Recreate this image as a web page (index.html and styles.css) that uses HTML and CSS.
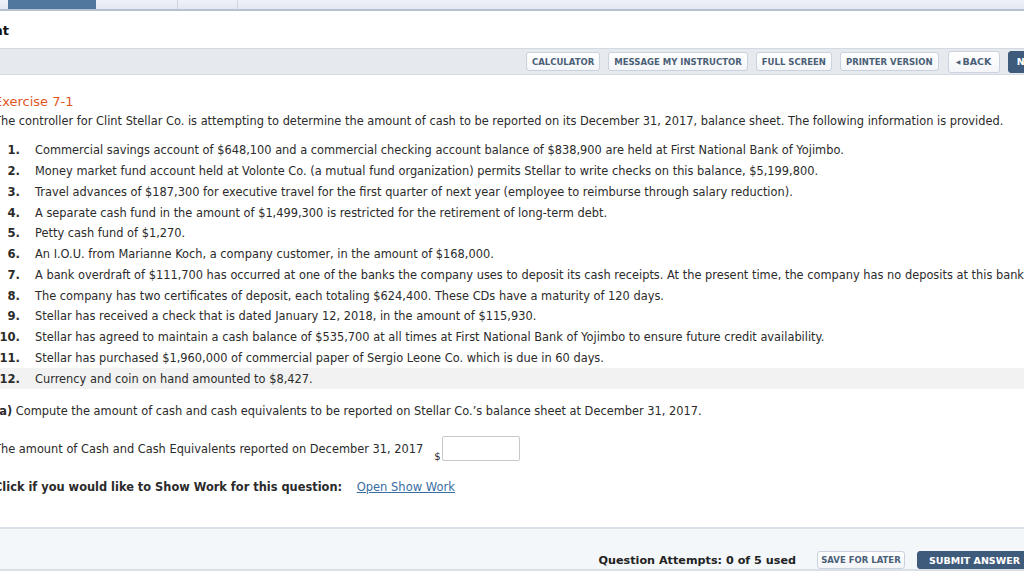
FILE: index.html
```html
<!DOCTYPE html>
<html lang="en">
<head>
<meta charset="utf-8">
<title>Exercise 7-1</title>
<link rel="stylesheet" href="styles.css">
</head>
<body>
<div class="tabs">
  <div class="tab active"></div>
  <div class="tab t2"></div>
  <div class="tab t3"></div>
  <div class="tab rest"></div>
</div>
<header class="titlebar">
  <div class="title-clip"><h1 class="title">Assignment</h1></div>
</header>
<nav class="toolbar">
  <button class="btn">CALCULATOR</button>
  <button class="btn">MESSAGE MY INSTRUCTOR</button>
  <button class="btn">FULL SCREEN</button>
  <button class="btn">PRINTER VERSION</button>
  <button class="btn nav-btn back"><span class="arrow">&#9664;</span>BACK</button>
  <button class="btn nav-btn dark">NEXT</button>
</nav>
<main class="content">
  <h2 class="exercise">Exercise 7-1</h2>
  <p class="intro">The controller for Clint Stellar Co. is attempting to determine the amount of cash to be reported on its December 31, 2017, balance sheet. The following information is provided.</p>
  <ol class="items">
    <li class="item"><span class="num">1.</span><span class="txt">Commercial savings account of $648,100 and a commercial checking account balance of $838,900 are held at First National Bank of Yojimbo.</span></li>
    <li class="item"><span class="num">2.</span><span class="txt">Money market fund account held at Volonte Co. (a mutual fund organization) permits Stellar to write checks on this balance, $5,199,800.</span></li>
    <li class="item"><span class="num">3.</span><span class="txt">Travel advances of $187,300 for executive travel for the first quarter of next year (employee to reimburse through salary reduction).</span></li>
    <li class="item"><span class="num">4.</span><span class="txt">A separate cash fund in the amount of $1,499,300 is restricted for the retirement of long-term debt.</span></li>
    <li class="item"><span class="num">5.</span><span class="txt">Petty cash fund of $1,270.</span></li>
    <li class="item"><span class="num">6.</span><span class="txt">An I.O.U. from Marianne Koch, a company customer, in the amount of $168,000.</span></li>
    <li class="item"><span class="num">7.</span><span class="txt">A bank overdraft of $111,700 has occurred at one of the banks the company uses to deposit its cash receipts. At the present time, the company has no deposits at this bank.</span></li>
    <li class="item"><span class="num">8.</span><span class="txt">The company has two certificates of deposit, each totaling $624,400. These CDs have a maturity of 120 days.</span></li>
    <li class="item"><span class="num">9.</span><span class="txt">Stellar has received a check that is dated January 12, 2018, in the amount of $115,930.</span></li>
    <li class="item"><span class="num">10.</span><span class="txt">Stellar has agreed to maintain a cash balance of $535,700 at all times at First National Bank of Yojimbo to ensure future credit availability.</span></li>
    <li class="item"><span class="num">11.</span><span class="txt">Stellar has purchased $1,960,000 of commercial paper of Sergio Leone Co. which is due in 60 days.</span></li>
    <li class="item shaded"><span class="num">12.</span><span class="txt">Currency and coin on hand amounted to $8,427.</span></li>
  </ol>
  <p class="question"><b>(a)</b> Compute the amount of cash and cash equivalents to be reported on Stellar Co.’s balance sheet at December 31, 2017.</p>
  <div class="answer-row">
    <span class="answer-label">The amount of Cash and Cash Equivalents reported on December 31, 2017</span>
    <span class="dollar">$</span>
    <input class="answer-input" type="text" aria-label="amount">
  </div>
  <p class="showwork"><b>Click if you would like to Show Work for this question:</b> <a class="link" href="#">Open Show Work</a></p>
</main>
<footer class="footer">
  <span class="attempts">Question Attempts: 0 of 5 used</span>
  <button class="btn save">SAVE FOR LATER</button>
  <button class="btn submit">SUBMIT ANSWER</button>
</footer>
</body>
</html>
```

FILE: styles.css
```css
* { box-sizing: border-box; }
html, body { margin: 0; padding: 0; }
body {
  width: 1024px;
  height: 576px;
  overflow: hidden;
  background: #fff;
  font-family: "DejaVu Sans", Verdana, sans-serif;
  font-size: 11.4px;
  color: #2b2b2b;
}

/* top tabs */
.tabs {
  display: flex;
  height: 11px;
  background: linear-gradient(#eef1f7, #e3e8f1);
  border-bottom: 2px solid #b6c2d0;
}
.tab { height: 100%; border-right: 1px solid #cfd6e1; }
.tab.active { width: 88px; margin-left: 8px; background: #51779e; border-right: none; }
.tab.t2 { width: 82px; }
.tab.t3 { width: 60px; }
.tab.rest { flex: 1; border-right: none; }

/* title */
.titlebar {
  height: 37px;
  display: flex;
  align-items: center;
}
.title-clip {
  width: 9px;
  display: flex;
  justify-content: flex-end;
}
.title {
  margin: 0;
  font-size: 13px;
  font-weight: bold;
  color: #111;
  white-space: nowrap;
  padding-top: 2px;
}

/* toolbar */
.toolbar {
  height: 27px;
  background: #e6eaef;
  border-top: 1px solid #d3dae3;
  border-bottom: 1px solid #d3dae3;
  display: flex;
  align-items: center;
  padding-left: 526px;
  gap: 8px;
}
.btn {
  font-family: "DejaVu Sans", Verdana, sans-serif;
  font-weight: bold;
  font-size: 8.5px;
  color: #4a6077;
  background: linear-gradient(#ffffff, #f3f5f8);
  border: 1px solid #c9d2dd;
  border-radius: 3px;
  height: 19px;
  padding: 0 5px;
  white-space: nowrap;
  flex: none;
}
.nav-btn { height: 22px; font-size: 9.5px; padding: 0 8px; }
.toolbar .back { margin-left: 1px; width: 52px; padding: 0 6px; }
.arrow { font-size: 6px; margin-right: 2px; vertical-align: 1px; }
.dark { background: #3f5b7b; color: #fff; border-color: #3f5b7b; }

/* content */
.content {
  margin-left: -6px;
  padding-top: 18px;
  height: 452px;
}
.exercise {
  margin: 0;
  font-size: 13px;
  font-weight: normal;
  color: #e0561d;
  line-height: 18px;
}
.intro { margin: 2px 0 0; line-height: 17px; }
.items {
  list-style: none;
  margin: 10px 0 0;
  padding: 0;
}
.item {
  display: flex;
  height: 20.75px;
  align-items: center;
  white-space: nowrap;
}
.item.shaded { background: #f2f2f2; }
.num {
  width: 26px;
  text-align: right;
  font-weight: bold;
  font-size: 11.6px;
  flex: none;
}
.txt { margin-left: 15px; }
.question { margin: 14px 0 0; line-height: 17px; }
.answer-row {
  margin-top: 16px;
  display: flex;
  align-items: center;
  height: 25px;
}
.dollar { margin-left: 11px; padding-top: 15px; font-size: 10px; }
.answer-input {
  width: 78px;
  height: 25px;
  margin-left: 1px;
  border: 1px solid #c8c8c8;
  border-radius: 2px;
}
.showwork { margin: 18px 0 0; font-size: 11.4px; line-height: 17px; }
.link { color: #3a6da3; font-size: 11.5px; margin-left: 11px; }

/* footer */
.footer {
  height: 44px;
  background: #f4f7fa;
  border-top: 2px solid #d9e0e8;
  border-bottom: 2px solid #d9e0e8;
  display: flex;
  align-items: flex-end;
  justify-content: flex-end;
}
.attempts {
  font-size: 11.2px;
  font-weight: bold;
  color: #222;
  margin-right: 21px;
  padding-bottom: 2px;
}
.save { height: 18px; width: 88px; padding: 0; }
.submit {
  height: 18px;
  margin-left: 12px;
  margin-right: -8px;
  background: #3f5b7b;
  color: #fff;
  border-color: #3f5b7b;
  font-size: 9.5px;
  padding: 0 11px;
}
```
